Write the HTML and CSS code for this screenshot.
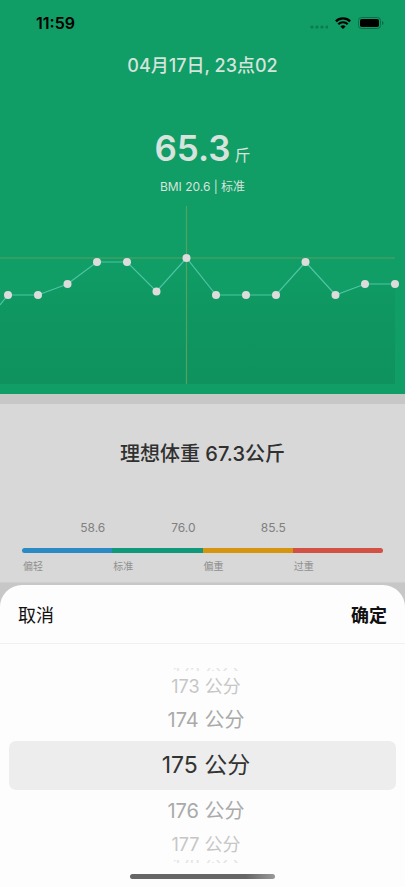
FILE: index.html
```html
<!DOCTYPE html>
<html lang="zh-CN">
<head>
<meta charset="UTF-8">
<meta name="viewport" content="width=device-width, initial-scale=1.0">
<title>体重记录</title>
<link rel="stylesheet" href="styles.css">
</head>
<body>

<div class="page">
    <section class="hero">
        <div class="status">
            <span class="clock">11:59</span>
            <div class="status-icons">
                <svg class="signal" width="18" height="4" viewBox="0 0 18 4" fill="#0a7a50">
                    <circle cx="2" cy="2" r="1.6"/><circle cx="7" cy="2" r="1.6"/><circle cx="12" cy="2" r="1.6"/><circle cx="17" cy="2" r="1.6"/>
                </svg>
                <svg width="16" height="12" viewBox="0 0 16 12" fill="none" stroke="#000">
                    <path d="M0.9 4.3 A10 10 0 0 1 15.1 4.3" stroke-width="2.4"/>
                    <path d="M3.3 7.2 A6.6 6.6 0 0 1 12.7 7.2" stroke-width="2.2"/>
                    <path d="M8 12 L5.4 9.5 A3.6 3.6 0 0 1 10.6 9.5 Z" fill="#000" stroke="none"/>
                </svg>
                <svg width="26" height="12" viewBox="0 0 26 12">
                    <rect x="0.5" y="0.5" width="22" height="11" rx="3" fill="none" stroke="#0a6f48"/>
                    <rect x="2" y="2" width="19" height="8" rx="1.8" fill="#000"/>
                    <path d="M24 4 Q25.6 4.6 25.6 6 Q25.6 7.4 24 8 Z" fill="#0a6f48"/>
                </svg>
            </div>
        </div>
        <h1 class="date">04月17日, 23点02</h1>
        <p class="weight">65.3<span class="unit">斤</span></p>
        <p class="bmi">BMI 20.6 | 标准</p>
        <svg class="chart" viewBox="0 0 405 178">
            <defs>
                <linearGradient id="area" x1="0" y1="0" x2="0" y2="1">
                    <stop offset="0" stop-color="#109d66"/>
                    <stop offset="0.4" stop-color="#0f9761"/>
                    <stop offset="1" stop-color="#0f925e"/>
                </linearGradient>
            </defs>
            <path d="M0 99 L8 89 L38 89 L67.5 78 L97 56 L127 56 L156.5 85.5 L186.5 52 L216 89 L246 89 L276 89 L305.5 56 L335.5 89 L365 78 L395 78 V178 H0 Z" fill="url(#area)"/>
            <path d="M0 52 H395 M186.5 0 V178" stroke="#55a262" stroke-width="1.2"/>
            <path d="M0 99 L8 89 L38 89 L67.5 78 L97 56 L127 56 L156.5 85.5 L186.5 52 L216 89 L246 89 L276 89 L305.5 56 L335.5 89 L365 78 L395 78" fill="none" stroke="#4fc5a6" stroke-width="1.2"/>
            <g fill="#dcdcdc">
                <circle cx="8" cy="89" r="4"/>
                <circle cx="38" cy="89" r="4"/>
                <circle cx="67.5" cy="78" r="4"/>
                <circle cx="97" cy="56" r="4"/>
                <circle cx="127" cy="56" r="4"/>
                <circle cx="156.5" cy="85.5" r="4"/>
                <circle cx="186.5" cy="52" r="4"/>
                <circle cx="216" cy="89" r="4"/>
                <circle cx="246" cy="89" r="4"/>
                <circle cx="276" cy="89" r="4"/>
                <circle cx="305.5" cy="56" r="4"/>
                <circle cx="335.5" cy="89" r="4"/>
                <circle cx="365" cy="78" r="4"/>
                <circle cx="395" cy="78" r="4"/>
            </g>
        </svg>
    </section>

    <section class="ideal">
        <h2>理想体重 67.3公斤</h2>
        <div class="scale">
            <div class="range light"><span class="limit">58.6</span><i class="bar"></i><span class="name">偏轻</span></div>
            <div class="range normal"><span class="limit">76.0</span><i class="bar"></i><span class="name">标准</span></div>
            <div class="range heavy"><span class="limit">85.5</span><i class="bar"></i><span class="name">偏重</span></div>
            <div class="range over"><span class="limit"></span><i class="bar"></i><span class="name">过重</span></div>
        </div>
    </section>
</div>

<!-- Height picker -->
<div class="sheet">
    <div class="sheet-head">
        <button type="button">取消</button>
        <button type="button" class="confirm">确定</button>
    </div>
    <div class="wheel" role="listbox" aria-label="身高">
        <div class="item edge" role="option">172 公分</div>
        <div class="item far" role="option">173 公分</div>
        <div class="item near" role="option">174 公分</div>
        <div class="item selected" role="option" aria-selected="true">175 公分</div>
        <div class="item near" role="option">176 公分</div>
        <div class="item far" role="option">177 公分</div>
        <div class="item edge" role="option">178 公分</div>
    </div>
    <div class="home-bar"></div>
</div>

</body>
</html>
```
FILE: styles.css
```css
* { box-sizing:border-box; }
body { margin:0; background:#c6c7c6; font-family:Inter,"Noto Sans CJK SC",sans-serif; color:#303030; }
h1, h2, p { margin:0; }
.page { min-height:100vh; }

.hero { background:#109d66; color:#d7e3dc; text-align:center; padding-bottom:10px; }
.status { display:flex; justify-content:space-between; align-items:center; height:46px; padding:0 21px 0 36px; color:#000; }
.clock { font-size:16px; font-weight:600; }
.status-icons { display:flex; align-items:center; gap:7px; }
.signal { margin-top:8px; }
.date { font-size:18px; line-height:40px; font-weight:500; }
.weight { margin-top:36px; font-size:35px; line-height:52px; font-weight:600; }
.unit { margin-left:4px; font-size:16px; line-height:1; font-weight:400; }
.bmi { margin-top:3px; font-size:12px; line-height:20px; }
.chart { display:block; width:100%; margin-top:9px; }

.ideal { margin-top:10px; padding:30px 22px 8px; background:#d8d8d8; border-bottom:1px solid #cecece; }
.ideal h2 { font-size:20px; line-height:40px; font-weight:500; text-align:center; }
.scale { display:grid; grid-template-columns:repeat(4,1fr); margin-top:44px; }
.range { display:flex; flex-direction:column; }
.limit { height:20px; margin-bottom:10px; padding-right:7px; text-align:right; font-size:12px; line-height:20px; color:#808080; }
.bar { height:5px; }
.name { margin-top:5px; padding-left:1px; font-size:10px; line-height:16px; color:#909090; }
.light .bar { background:#2b8ac4; border-radius:3px 0 0 3px; }
.normal .bar { background:#10987a; }
.heavy .bar { background:#d6950f; }
.over .bar { background:#d35045; border-radius:0 3px 3px 0; }

.sheet { position:fixed; left:0; right:0; bottom:0; padding-bottom:8px; background:#fdfdfd; border-radius:22px 22px 0 0; }
.sheet-head { display:flex; justify-content:space-between; padding:4px 18px 0; border-bottom:1px solid #f0f0f0; }
.sheet-head button { padding:0; border:0; background:none; font:400 18px/54px Inter,"Noto Sans CJK SC",sans-serif; color:#111; cursor:pointer; }
.sheet-head .confirm { font-weight:600; }
.wheel { display:flex; flex-direction:column; padding:24px 9px 11px; text-align:center; }
.item { padding-left:7px; overflow:hidden; }
/* the outermost rows only peek over the rim of the wheel */
.edge { height:3px; font-size:17px; line-height:10px; color:#e4e4e4; }
.edge:first-child { margin-bottom:3px; }
.edge:last-child { margin-top:3px; }
.far { font-size:18px; line-height:25px; color:#c6c6c6; }
.near { font-size:20px; line-height:42px; color:#aaa; }
.selected { border-radius:7px; background:#ededed; font-size:23px; line-height:49px; color:#333; }
.home-bar { width:36%; height:5px; margin:0 auto; border-radius:3px; background:linear-gradient(90deg,#666 80%,#999); }
```
